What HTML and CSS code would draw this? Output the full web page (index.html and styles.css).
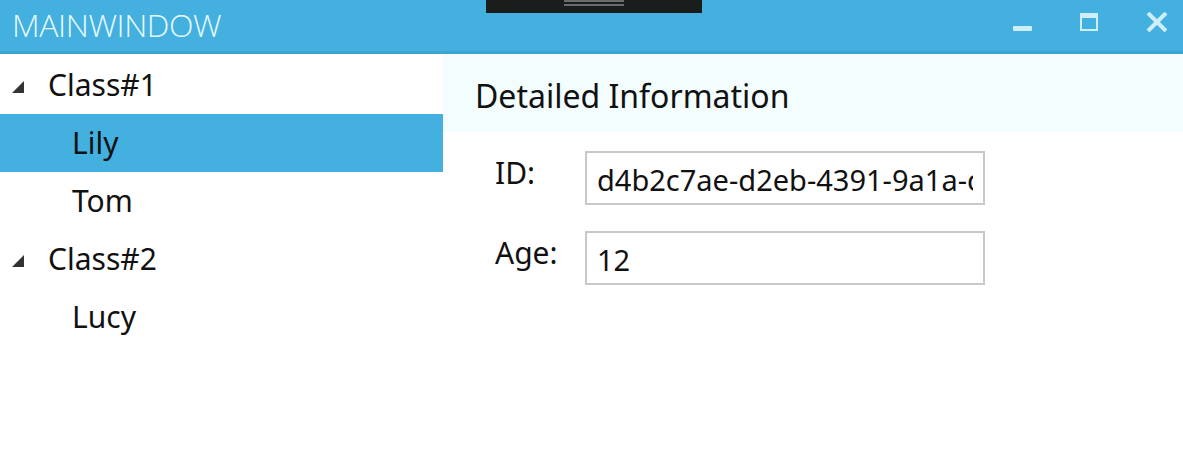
FILE: index.html
```html
<!DOCTYPE html>
<html lang="en">
<head>
  <meta charset="UTF-8">
  <title>MainWindow</title>
  <link rel="stylesheet" href="styles.css">
</head>
<body>
  <div class="window">
    <div class="titlebar">
      <span class="title">MAINWINDOW</span>
      <div class="grip"><span class="grip-line"></span><span class="grip-line"></span></div>
      <div class="controls">
        <svg class="ctl" width="20" height="20" viewBox="0 0 20 20">
          <rect x="1" y="14" width="19" height="5" rx="1" fill="#cdeefa"/>
        </svg>
        <svg class="ctl" width="20" height="20" viewBox="0 0 20 20">
          <rect x="2" y="2" width="16" height="16" fill="none" stroke="#cdeefa" stroke-width="2"/>
          <rect x="1" y="1" width="18" height="5" fill="#cdeefa"/>
        </svg>
        <svg class="ctl" width="22" height="20" viewBox="0 0 22 20">
          <path d="M2 1 L20 19 M20 1 L2 19" stroke="#cdeefa" stroke-width="4"/>
        </svg>
      </div>
    </div>
    <div class="main">
      <div class="tree">
        <div class="node group"><span class="arrow"></span>Class#1</div>
        <div class="node child selected">Lily</div>
        <div class="node child">Tom</div>
        <div class="node group"><span class="arrow"></span>Class#2</div>
        <div class="node child">Lucy</div>
      </div>
      <div class="details">
        <div class="details-header">Detailed Information</div>
        <div class="form">
          <div class="form-row">
            <label for="personId">ID:</label>
            <input class="field" id="personId" type="text" value="d4b2c7ae-d2eb-4391-9a1a-c8f5e3b1a0d2" readonly>
          </div>
          <div class="form-row">
            <label for="personAge">Age:</label>
            <input class="field" id="personAge" type="text" value="12" readonly>
          </div>
        </div>
      </div>
    </div>
  </div>
</body>
</html>
```

FILE: styles.css
```css
/* mise en page de la fenêtre */
body {
  margin: 0;
  background: #fff;
  font-family: "Noto Sans", "Open Sans", sans-serif;
  color: #111;
}

.window {
  width: 1183px;
  height: 461px;
  overflow: hidden;
}

.titlebar {
  position: relative;
  height: 51px;
  background-color: #43b0e0;
  border-bottom: 3px solid #3ea3cf;
  display: flex;
  align-items: center;
}

.title {
  margin-left: 12px;
  margin-top: -3px;
  font-family: "Open Sans", sans-serif;
  font-weight: 300;
  font-size: 32px;
  color: #e6f8ff;
  letter-spacing: -0.4px;
}

.grip {
  position: absolute;
  left: 486px;
  top: 0;
  width: 216px;
  height: 13px;
  background: #1b1c1c;
  display: flex;
  flex-direction: column;
  align-items: center;
  gap: 2px;
}

.grip-line {
  width: 60px;
  height: 2px;
  background: #6a6c6c;
}

.controls {
  margin-left: auto;
  margin-right: 15px;
  margin-top: -8px;
  display: flex;
  gap: 47px;
  align-items: center;
}

.main {
  display: flex;
}

.tree {
  width: 443px;
  padding-top: 2px;
}

.node {
  height: 58px;
  display: flex;
  align-items: center;
  font-size: 30px;
  line-height: 1;
}

.group {
  padding-left: 12px;
}

.child {
  padding-left: 72px;
}

.selected {
  background-color: #43b0e0;
}

.arrow {
  width: 0;
  height: 0;
  border-left: 12px solid transparent;
  border-bottom: 12px solid #333;
  margin-right: 24px;
  margin-top: 4px;
}

.details {
  flex: 1;
}

.details-header {
  height: 78px;
  background-color: #f3fdfd;
  padding-left: 32px;
  display: flex;
  align-items: center;
  font-size: 32px;
  padding-top: 4px;
  box-sizing: border-box;
}

.form {
  padding-top: 19px;
  padding-left: 52px;
}

.form-row {
  display: flex;
  margin-bottom: 26px;
}

.form-row label {
  width: 90px;
  font-size: 30px;
  padding-top: 1px;
}

.field {
  width: 400px;
  height: 54px;
  border: 2px solid #c8c8c8;
  padding: 3px 10px 0 10px;
  margin: 0;
  box-sizing: border-box;
  font-family: "Noto Sans", "Open Sans", sans-serif;
  font-size: 29px;
  color: #111;
  background: #fff;
  outline: none;
}
```
